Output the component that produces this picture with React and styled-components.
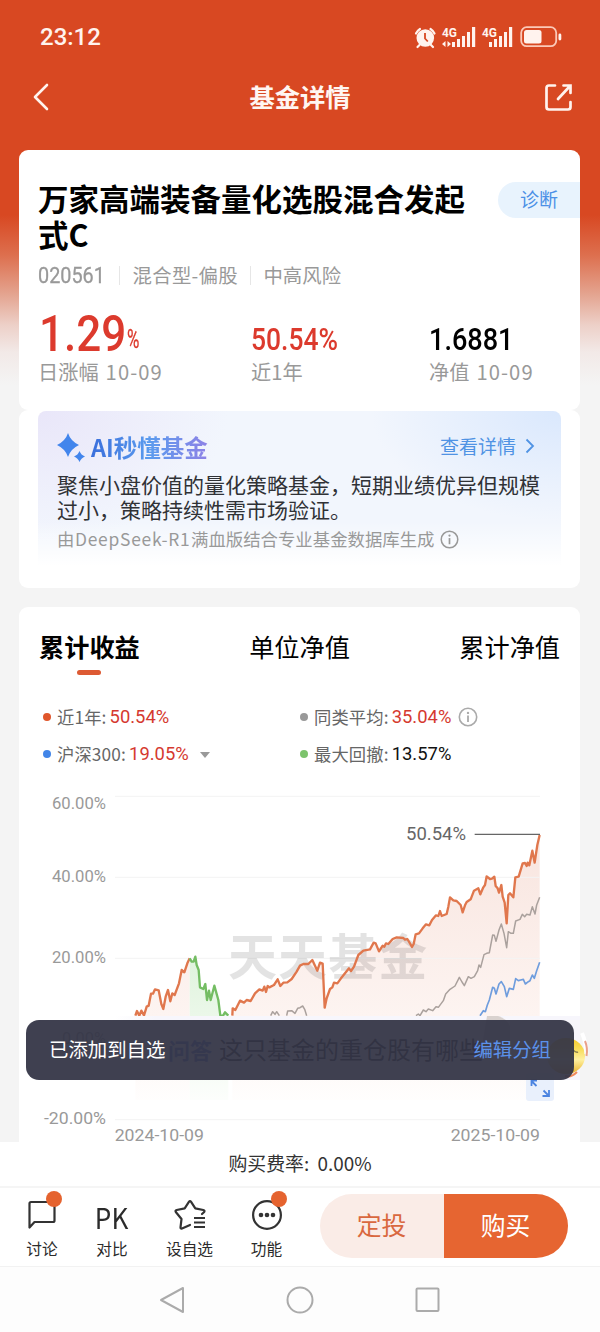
import React from "react";
import styled, { createGlobalStyle, css } from "styled-components";

const GlobalStyle = createGlobalStyle`
  * {
    box-sizing: border-box;
  }
  body {
    margin: 0;
    background: #f4f4f4;
    font-family: "Noto Sans CJK SC", sans-serif;
  }
`;

const Screen = styled.div`
  position: relative;
  display: flex;
  flex-direction: column;
  width: 600px;
  height: 1332px;
  overflow: hidden;
  background: linear-gradient(
    #d84822 0,
    #d84822 215px,
    #dd6f4e 255px,
    #e4a591 295px,
    #edd0c8 325px,
    #f2e9e7 352px,
    #f4f4f4 385px
  );
`;

const Digits = styled.span`
  display: inline-block;
  font-family: Roboto, sans-serif;
  transform: scaleX(${(p) => p.$narrow || 1});
  transform-origin: left center;
`;

const StatusBar = styled.div`
  display: flex;
  justify-content: space-between;
  height: 74px;
  padding: 22px 38px 0 40px;
  color: #fff3ee;
  font-family: Roboto, sans-serif;
  font-size: 24px;
  font-weight: 500;
  line-height: 30px;
`;

const NavBar = styled.div`
  display: flex;
  align-items: center;
  justify-content: space-between;
  height: 46px;
  margin-bottom: 30px;
  padding: 0 27px 0 32px;
`;

const NavTitle = styled.h1`
  margin: -2px 0 0 6px;
  color: #fff6f2;
  font-size: 25.3px;
  font-weight: 700;
  line-height: 44px;
`;

const Content = styled.div`
  flex: none;
  height: 992px;
  padding: 0 20px 0 19px;
`;

const Card = styled.section`
  background: #fff;
  border-radius: 9px;
`;

const SummaryCard = styled(Card)`
  height: 260px;
  padding: 30px 0 0 19px;
`;

const TitleRow = styled.div`
  display: flex;
  justify-content: space-between;
  align-items: flex-start;
`;

const FundName = styled.h2`
  width: 430px;
  margin: 0;
  color: #000;
  font-size: 30.5px;
  font-weight: 700;
  line-height: 36px;
`;

const DiagnoseTag = styled.span`
  width: 82px;
  height: 36px;
  margin-top: 2px;
  padding-left: 22px;
  border-radius: 18px 0 0 18px;
  background: #e8f3fd;
  color: #4c90e6;
  font-size: 19px;
  line-height: 34px;
`;

const Meta = styled.div`
  display: flex;
  align-items: center;
  height: 24px;
  margin-top: 11px;
  color: #999;
  font-size: 19.4px;
  line-height: 24px;
`;

const FundCode = styled(Digits)`
  width: 67px;
  padding-top: 1px;
  font-size: 22px;
  -webkit-text-stroke: 0.3px #999;
`;

const FundType = styled.span`
  letter-spacing: ${(p) => p.$space || 0}px;
`;

const Divider = styled.i`
  width: 1px;
  height: 19px;
  margin: 0 12.5px 0 ${(p) => p.$left || 12}px;
  background: #e6e6e6;
`;

const Stats = styled.div`
  display: grid;
  grid-template-columns: 213px 178px auto;
  align-items: end;
  margin-top: 25px;
`;

const StatValue = styled.div`
  display: flex;
  height: ${(p) => (p.$big ? 44 : 32)}px;
  padding-left: ${(p) => (p.$big ? 1 : 0)}px;
  color: ${(p) => (p.$up ? "#dc3a2d" : "#000")};
  font-size: ${(p) => (p.$big ? 50 : 31.5)}px;
  font-weight: 500;
  line-height: ${(p) => (p.$big ? 44 : 32)}px;
`;

const SmallPercent = styled(Digits)`
  width: 14px;
  margin-left: -11px;
  padding-top: 10px;
  font-size: 26px;
  font-weight: 400;
  line-height: 34px;
  -webkit-text-stroke: 0.3px #dc3a2d;
`;

const StatLabel = styled.div`
  margin-top: 3px;
  color: #999;
  font-size: 20.2px;
  line-height: 26px;
`;

const StatDate = styled.span`
  margin-left: 7px;
  letter-spacing: 1.1px;
`;

const AiCard = styled(Card)`
  height: 178px;
  padding: 1px 19px 0;
`;

const AiPanel = styled.div`
  height: 158px;
  padding: 22px 19px 0;
  border-radius: 8px 8px 0 0;
  background: linear-gradient(rgba(255, 255, 255, 0) 70%, #fff 98%),
    radial-gradient(ellipse 190px 130px at 0 0, #e9e6f9, rgba(233, 230, 249, 0)),
    radial-gradient(ellipse 190px 110px at 100% 0, #dae8fd, rgba(218, 232, 253, 0)),
    #f2f6fd;
`;

const AiHead = styled.div`
  display: flex;
  align-items: center;
  height: 28px;
`;

const AiTitle = styled.b`
  margin-left: 5px;
  background: linear-gradient(90deg, #3a6fdc, #5b9bee 50%, #8e82e6);
  background-clip: text;
  color: transparent;
  font-size: 23.5px;
  line-height: 28px;
`;

const AiMore = styled.span`
  display: flex;
  align-items: center;
  gap: 9px;
  margin: -2px 7px 0 auto;
  color: #5093e4;
  font-size: 19px;
  line-height: 28px;
`;

const AiText = styled.p`
  width: 492px;
  margin: 11px 0 0;
  color: #303236;
  font-size: 21px;
  line-height: 25px;
`;

const AiSource = styled.div`
  display: flex;
  align-items: center;
  gap: 5px;
  margin-top: 5px;
  color: #999;
  font-size: 17.4px;
  line-height: 24px;
`;

const ModelName = styled.span`
  margin: 0 -4.4px;
  letter-spacing: 0.75px;
`;

const ChartCard = styled(Card)`
  height: 535px;
  margin-top: 19px;
  padding-top: 21px;
  border-radius: 9px 9px 0 0;
`;

const Tabs = styled.div`
  display: flex;
  justify-content: space-between;
  padding: 0 20px;
`;

const Tab = styled.div`
  display: flex;
  flex-direction: column;
  align-items: center;
  color: #000;
  font-size: 25.2px;
  font-weight: ${(p) => (p.$active ? 700 : 400)};
  line-height: 36px;
  ${(p) =>
    p.$active &&
    css`
      &::after {
        content: "";
        width: 24px;
        height: 5px;
        margin-top: 6px;
        border-radius: 3px;
        background: #dd5a33;
      }
    `}
`;

const Legend = styled.div`
  display: grid;
  grid-template-columns: 257px auto;
  grid-auto-rows: 37px;
  align-items: center;
  margin-top: 23px;
  padding-left: 24px;
`;

const LegendItem = styled.div`
  display: flex;
  align-items: center;
  color: #666;
  font-size: 17.3px;
  letter-spacing: 0.15px;
  line-height: 24px;
`;

const Dot = styled.i`
  width: 8px;
  height: 8px;
  margin-right: 6px;
  border-radius: 50%;
  background: ${(p) => p.$color};
`;

const LegendValue = styled(Digits)`
  margin: 0 7px 0 3px;
  color: ${(p) => (p.$up ? "#d5392f" : "#111")};
  font-size: 18.4px;
  letter-spacing: 0;
`;

const Caret = styled.i`
  margin: 2px 0 0 4px;
  border: 5px solid transparent;
  border-top: 6px solid #999;
  border-bottom: 0;
`;

const ChartSvg = styled.svg`
  display: block;
  margin: 14px 0 0 19px;
  overflow: visible;
  font-family: Roboto, sans-serif;
`;

const FeeBar = styled.div`
  height: 46px;
  flex: none;
  border-bottom: 2px solid #f5f5f5;
  background: #fff;
  color: #333;
  font-size: 18.9px;
  line-height: 41px;
  text-align: center;
  word-spacing: 4px;
`;

const ActionBar = styled.div`
  display: grid;
  grid-template-columns: 84px 56px 99px 55px auto;
  flex: none;
  height: 79px;
  border-bottom: 1px solid #f2f2f2;
  background: #fff;
`;

const Action = styled.div`
  display: flex;
  flex-direction: column;
  align-items: center;
  padding-top: 12px;
  color: #2b2b2b;
  font-size: 15.7px;
  line-height: 22px;
`;

const ActionIcon = styled.div`
  position: relative;
  height: 36px;
  margin-bottom: 2px;
`;

const Badge = styled.i`
  position: absolute;
  top: -9px;
  right: ${(p) => p.$right}px;
  width: 16px;
  height: 16px;
  border-radius: 50%;
  background: #e5632f;
`;

const BuyButtons = styled.div`
  display: grid;
  grid-template-columns: 1fr 1fr;
  width: 248px;
  height: 64px;
  margin: 6px 0 0 26px;
  border-radius: 32px;
  overflow: hidden;
`;

const BuyButton = styled.button`
  padding: 0 1px 4px 0;
  border: 0;
  background: ${(p) => (p.$primary ? "#e66531" : "#faece7")};
  color: ${(p) => (p.$primary ? "#fff" : "#d9683f")};
  font-family: inherit;
  font-size: 24.8px;
`;

const SystemNav = styled.div`
  display: flex;
  justify-content: center;
  align-items: center;
  gap: 100px;
  flex: 1;
  background: #fdfdfd;
`;

const AskBar = styled.div`
  position: absolute;
  top: 1016px;
  left: 115px;
  width: 465px;
  height: 64px;
  padding-left: 53px;
  background: linear-gradient(90deg, #fff, #f7f6fc 40px);
  color: #000;
  font-size: 24px;
  line-height: 66px;
  white-space: nowrap;
  overflow: hidden;

  b {
    margin-right: 7px;
    color: #3a5cd8;
    font-size: 22px;
  }
`;

const Mascot = styled.svg`
  position: absolute;
  left: ${(p) => p.$left}px;
  top: ${(p) => p.$top}px;
`;

const ExpandButton = styled.div`
  position: absolute;
  left: 526px;
  top: 1073px;
  width: 28px;
  height: 28px;
  border-radius: 3px;
  background: #e9f0fc;
`;

const Toast = styled.div`
  position: absolute;
  top: 1020px;
  left: 26px;
  display: flex;
  justify-content: space-between;
  width: 548px;
  height: 60px;
  padding: 0 23px;
  border-radius: 13px;
  background: rgba(53, 54, 71, 0.95);
  color: #fff;
  font-size: 19.4px;
  line-height: 57px;
`;

const ToastLink = styled.span`
  color: #5b91ea;
`;

const tabs = ["累计收益", "单位净值", "累计净值"];

const legend = [
  { color: "#e0562b", label: "近1年:", value: "50.54%", up: true },
  { color: "#999", label: "同类平均:", value: "35.04%", up: true, info: true },
  { color: "#4285e8", label: "沪深300:", value: "19.05%", up: true, menu: true },
  { color: "#7cc36c", label: "最大回撤:", value: "13.57%" },
];

// chart points use three units per pixel
const fundStart =
  "406,707 411,693 418,707 424,692 432,706 440,680 446,677 453,641 459,641 465,628 476,631 484,672 490,687 497,650 504,630 511,664 517,640 524,645 537,610 545,570 553,577 562,550 569,535";
const fundDrop =
  "569,535 575,545 581,545 586,530 590,555 596,570 600,622 610,627 616,612 621,660 627,632 632,660 643,617 655,660 661,707 669,707 675,697 685,707";
const fundEnd =
  "697,707 698,685 706,690 720,662 732,668 740,660 752,663 765,640 778,628 788,632 793,620 798,636 803,618 808,622 822,615 833,598 841,618 850,608 862,607 875,597 890,575 900,557 910,552 925,552 937,540 952,572 960,548 968,551 974,683 980,655 990,627 997,622 1002,608 1012,610 1023,595 1035,580 1047,565 1053,573 1062,560 1075,525 1090,512 1110,508 1121,488 1127,490 1137,514 1148,497 1153,500 1158,490 1165,492 1178,477 1190,472 1210,474 1215,479 1222,477 1230,490 1236,501 1241,492 1247,463 1257,460 1268,445 1278,433 1288,436 1296,420 1308,406 1315,408 1320,393 1325,408 1340,402 1345,380 1350,352 1360,361 1370,363 1382,375 1388,397 1395,376 1400,366 1412,358 1422,332 1435,325 1441,343 1450,322 1455,315 1460,289 1470,297 1476,296 1483,290 1487,318 1493,325 1497,338 1504,315 1508,350 1514,368 1520,430 1525,345 1530,340 1540,352 1546,292 1556,290 1568,250 1575,249 1580,258 1583,248 1588,256 1597,212 1604,248 1612,195 1619,165";
const averageStart =
  "812,707 818,695 825,703 830,695 838,707";
const averageMiddle =
  "860,707 863,693 875,692 885,700 893,685 900,683 908,678 914,688 920,707";
const averageEnd =
  "1248,707 1255,702 1260,707 1270,690 1278,695 1285,687 1298,692 1308,680 1315,682 1330,662 1337,642 1350,628 1365,618 1378,592 1386,606 1393,617 1405,590 1413,595 1423,590 1433,572 1437,555 1442,562 1452,524 1460,520 1468,518 1478,465 1483,466 1488,484 1497,450 1504,432 1512,460 1520,503 1525,455 1533,460 1540,460 1547,423 1560,418 1567,403 1574,410 1580,403 1590,405 1597,380 1605,402 1610,375 1619,352";
const index300 =
  "1440,707 1450,692 1456,695 1462,675 1468,660 1478,622 1483,625 1488,642 1497,612 1504,605 1513,620 1520,650 1528,625 1540,628 1547,596 1555,602 1562,600 1570,598 1576,612 1585,605 1590,602 1597,585 1603,595 1610,572 1619,547";

const InfoIcon = ({ size, color }) => (
  <svg width={size} height={size} viewBox="0 0 20 20" fill="none" stroke={color}>
    <circle cx="10" cy="10" r="8.7" strokeWidth="1.6" />
    <path d="M10 8.500v6.500" strokeWidth="1.800" />
    <circle cx="10" cy="5.900" r="1.200" fill={color} stroke="none" />
  </svg>
);

const StatusIcons = () => (
  <svg width="148" height="30" viewBox="414 22 148 30" fill="#fff3ee">
    <circle cx="425.300" cy="38" r="8.800" />
    <path
      d="M416 33.500a11 11 0 0 1 4-4.500M434.500 33.500a11 11 0 0 0-4-4.500M419.500 45l-2 2M431 45l2 2"
      fill="none"
      stroke="#fff3ee"
      strokeWidth="2.200"
      strokeLinecap="round"
    />
    <path d="M425 33v5.500l2.800 3" fill="none" stroke="#d84822" strokeWidth="1.800" />
    <text x="442" y="37" fontSize="12.500" fontWeight="700" textLength="15" lengthAdjust="spacingAndGlyphs">
      4G
    </text>
    <path d="M442 44l3.500-3v6zM451 44l-3.500-3v6z" />
    <path d="M452 42h3v5h-3zM457 39h3v8h-3zM462 36h3v11h-3zM467 32h3v15h-3zM472 27h3.200v20H472z" />
    <text x="482" y="37" fontSize="12.500" fontWeight="700" textLength="15" lengthAdjust="spacingAndGlyphs">
      4G
    </text>
    <path d="M489 42h3v5h-3zM494 39h3v8h-3zM499 36h3v11h-3zM504 32h3v15h-3zM509 27h3.200v20H509z" />
    <rect
      x="521.200"
      y="27.200"
      width="35"
      height="19"
      rx="5.500"
      fill="none"
      stroke="#fbc9b8"
      strokeWidth="1.800"
    />
    <rect x="524" y="30" width="17.500" height="13.500" rx="2.500" />
    <rect x="558.500" y="33.500" width="2.800" height="7" rx="1.400" />
  </svg>
);

const Chart = () => (
  <ChartSvg width="524" height="346" viewBox="114 18 1572 1038">
    <defs>
      <linearGradient id="rise" x1="0" y1="165" x2="0" y2="1000" gradientUnits="userSpaceOnUse">
        <stop offset="0" stopColor="#f8e5df" />
        <stop offset="0.65" stopColor="#fdf4f1" />
        <stop offset="1" stopColor="#fff" />
      </linearGradient>
      <linearGradient id="drop" x1="0" y1="530" x2="0" y2="1000" gradientUnits="userSpaceOnUse">
        <stop offset="0" stopColor="#dff3dc" />
        <stop offset="1" stopColor="#fff" />
      </linearGradient>
    </defs>
    <polygon fill="url(#rise)" points={`${fundStart} 569,960 406,960`} />
    <polygon fill="url(#rise)" points={`${fundEnd} 1619,960 697,960`} />
    <polygon fill="url(#drop)" points={`${fundDrop} 685,960 569,960`} />
    <path d="M345 49h1275M345 292h1275M345 535h1275M345 1019h1275" stroke="#f3f3f3" strokeWidth="3" />
    <text
      x="684"
      y="586"
      fill="#000"
      fillOpacity="0.11"
      fontFamily="Noto Sans CJK SC"
      fontSize="147"
      fontWeight="700"
      textLength="598"
    >
      天天基金
    </text>
    <g fill="none" strokeLinejoin="round">
      <g stroke="#aaa19d" strokeWidth="4.500">
        <polyline points={averageStart} />
        <polyline points={averageMiddle} />
        <polyline points={averageEnd} />
      </g>
      <polyline points={index300} stroke="#6f9ddd" strokeWidth="5" />
      <polyline points={fundStart} stroke="#e0774d" strokeWidth="7" />
      <polyline points={fundEnd} stroke="#e0774d" strokeWidth="7" />
      <polyline points={fundDrop} stroke="#74bd63" strokeWidth="7" />
      <path d="M1424 163h196" stroke="#666" strokeWidth="4" />
    </g>
    <g fill="#999" fontSize="52">
      <text x="156" y="86" textLength="162" lengthAdjust="spacingAndGlyphs">60.00%</text>
      <text x="156" y="306" textLength="162" lengthAdjust="spacingAndGlyphs">40.00%</text>
      <text x="156" y="549" textLength="162" lengthAdjust="spacingAndGlyphs">20.00%</text>
      <text x="186" y="792" textLength="132" lengthAdjust="spacingAndGlyphs">0.00%</text>
      <text x="132" y="1033" textLength="186" lengthAdjust="spacingAndGlyphs">-20.00%</text>
      <text x="344" y="1084" textLength="268" lengthAdjust="spacingAndGlyphs">2024-10-09</text>
      <text x="1352" y="1084" textLength="268" lengthAdjust="spacingAndGlyphs">2025-10-09</text>
    </g>
    <text x="1218" y="180" fill="#666" fontSize="54" textLength="180" lengthAdjust="spacingAndGlyphs">
      50.54%
    </text>
  </ChartSvg>
);

const ChatIcon = () => (
  <svg width="28" height="30" viewBox="0 0 28 30" fill="none" stroke="#333" strokeWidth="2.200">
    <path d="M1.500 27.500V3.500q0-1.500 1.500-1.500h22q1.500 0 1.500 1.500v17q0 1.500-1.500 1.500H6.500z" strokeLinejoin="round" />
  </svg>
);

const PkIcon = styled.div`
  font-family: "Noto Sans CJK SC", sans-serif;
  font-size: 29px;
  line-height: 32px;
  transform: scaleX(0.9);
`;

const StarListIcon = () => (
  <svg width="32" height="32" viewBox="0 0 32 32" fill="none" stroke="#333" strokeWidth="2.200">
    <path
      d="M16 25l-8 3.500q-1.600.500-1.500-1.200L7.500 19l-5.700-7q-.900-1.600.900-2l8-1.600 4.200-6.500q1.100-1.500 2.200 0l4.200 6.500 8 1.600q1.800.400.900 2L28 14"
      strokeLinejoin="round"
      strokeLinecap="round"
    />
    <path d="M20 18h11M20 22.500h11M20 27h11" />
  </svg>
);

const MoreIcon = () => (
  <svg width="30" height="30" viewBox="0 0 30 30" fill="#333">
    <circle cx="15" cy="15" r="13.900" fill="none" stroke="#333" strokeWidth="2.200" />
    <circle cx="9" cy="15" r="2.300" />
    <circle cx="15" cy="15" r="2.300" />
    <circle cx="21" cy="15" r="2.300" />
  </svg>
);

const Header = () => (
  <>
    <StatusBar>
      <span>23:12</span>
      <StatusIcons />
    </StatusBar>
    <NavBar>
      <svg width="18" height="28" viewBox="0 0 18 28" fill="none" stroke="#fff3ee" strokeWidth="2.600">
        <path d="M15 2L3 14l12 12" strokeLinecap="round" strokeLinejoin="round" />
      </svg>
      <NavTitle>基金详情</NavTitle>
      <svg width="29" height="29" viewBox="0 0 29 29" fill="none" stroke="#fff3ee" strokeWidth="2.700">
        <path d="M11 2.500H5Q2.500 2.500 2.500 5v19Q2.500 26.500 5 26.500h19q2.500 0 2.500-2.500v-5" strokeLinecap="round" />
        <path d="M14 16L26 3M19.500 2.500h7V10" strokeLinecap="round" />
      </svg>
    </NavBar>
  </>
);

const Summary = () => (
  <SummaryCard>
    <TitleRow>
      <FundName>万家高端装备量化选股混合发起式C</FundName>
      <DiagnoseTag>诊断</DiagnoseTag>
    </TitleRow>
    <Meta>
      <FundCode $narrow={0.9}>020561</FundCode>
      <Divider $left={14} />
      <FundType $space={0.3}>混合型-偏股</FundType>
      <Divider />
      <FundType>中高风险</FundType>
    </Meta>
    <Stats>
      <div>
        <StatValue $up $big>
          <Digits $narrow={0.88}>1.29</Digits>
          <SmallPercent $narrow={0.65}>%</SmallPercent>
        </StatValue>
        <StatLabel>
          日涨幅<StatDate>10-09</StatDate>
        </StatLabel>
      </div>
      <div>
        <StatValue $up>
          <Digits $narrow={0.84}>50.54%</Digits>
        </StatValue>
        <StatLabel>近1年</StatLabel>
      </div>
      <div>
        <StatValue>
          <Digits $narrow={0.86}>1.6881</Digits>
        </StatValue>
        <StatLabel>
          净值<StatDate>10-09</StatDate>
        </StatLabel>
      </div>
    </Stats>
  </SummaryCard>
);

const AiSummary = () => (
  <AiCard>
    <AiPanel>
      <AiHead>
        <svg width="29" height="30" viewBox="0 0 29 30" fill="#4285ec">
          <path d="M11 1q2.500 8 11 12-8.500 4-11 12Q8.500 17 0 13 8.500 9 11 1z" />
          <path d="M22.500 19q1.500 4 5.500 5.500-4 1.500-5.500 5.500-1.500-4-5.500-5.500 4-1.500 5.500-5.500z" />
        </svg>
        <AiTitle>AI秒懂基金</AiTitle>
        <AiMore>
          查看详情
          <svg width="10" height="16" viewBox="0 0 10 16" fill="none" stroke="#5093e4" strokeWidth="1.800">
            <path d="M1.500 1.500L8 8l-6.500 6.500" />
          </svg>
        </AiMore>
      </AiHead>
      <AiText>聚焦小盘价值的量化策略基金，短期业绩优异但规模过小，策略持续性需市场验证。</AiText>
      <AiSource>
        <span>由</span>
        <ModelName>DeepSeek-R1</ModelName>
        <span>满血版结合专业基金数据库生成</span>
        <InfoIcon size={19} color="#999" />
      </AiSource>
    </AiPanel>
  </AiCard>
);

const Performance = () => (
  <ChartCard>
    <Tabs>
      {tabs.map((tab, i) => (
        <Tab key={tab} $active={i === 0}>
          {tab}
        </Tab>
      ))}
    </Tabs>
    <Legend>
      {legend.map((item) => (
        <LegendItem key={item.label}>
          <Dot $color={item.color} />
          {item.label}
          <LegendValue $up={item.up}>{item.value}</LegendValue>
          {item.info && <InfoIcon size={20} color="#aaa" />}
          {item.menu && <Caret />}
        </LegendItem>
      ))}
    </Legend>
    <Chart />
  </ChartCard>
);

const Footer = () => (
  <>
    <FeeBar>购买费率: 0.00%</FeeBar>
    <ActionBar>
      <Action>
        <ActionIcon>
          <ChatIcon />
          <Badge $right={-6} />
        </ActionIcon>
        讨论
      </Action>
      <Action>
        <ActionIcon>
          <PkIcon>PK</PkIcon>
        </ActionIcon>
        对比
      </Action>
      <Action>
        <ActionIcon>
          <StarListIcon />
        </ActionIcon>
        设自选
      </Action>
      <Action>
        <ActionIcon>
          <MoreIcon />
          <Badge $right={-5} />
        </ActionIcon>
        功能
      </Action>
      <BuyButtons>
        <BuyButton>定投</BuyButton>
        <BuyButton $primary>购买</BuyButton>
      </BuyButtons>
    </ActionBar>
    <SystemNav>
      <svg width="28" height="28" viewBox="0 0 28 28" fill="none" stroke="#ababab" strokeWidth="2">
        <path d="M25 2v24L3 14z" strokeLinejoin="round" />
      </svg>
      <svg width="28" height="28" viewBox="0 0 28 28" fill="none" stroke="#ababab" strokeWidth="2">
        <circle cx="14" cy="14" r="12.500" />
      </svg>
      <svg width="28" height="28" viewBox="0 0 28 28" fill="none" stroke="#ababab" strokeWidth="2">
        <rect x="2.500" y="2.500" width="22" height="22.500" rx="1" />
      </svg>
    </SystemNav>
  </>
);

const App = () => (
  <Screen>
    <GlobalStyle />
    <Header />
    <Content>
      <Summary />
      <AiSummary />
      <Performance />
    </Content>
    <Footer />
    <AskBar>
      <b>问答</b>这只基金的重仓股有哪些
    </AskBar>
    <ExpandButton>
      <svg width="28" height="28" viewBox="0 0 28 28" fill="none" stroke="#4c84e0" strokeWidth="1.800">
        <path d="M10.500 13L5.500 8M5.500 13V7.500H11M17.500 17.500l5 5M23 17v6h-6.500" />
      </svg>
    </ExpandButton>
    <Mascot $left={476} $top={1016} width="40" height="40" viewBox="0 0 40 40">
      <path d="M11 0h11q8 2 12 10v20H6z" fill="#d9d2cf" />
    </Mascot>
    <Mascot $left={545} $top={1030} width="48" height="50" viewBox="0 0 48 50">
      <defs>
        <linearGradient id="coin" x1="0" y1="0" x2="0" y2="1">
          <stop offset="0" stopColor="#f6c92c" />
          <stop offset="0.3" stopColor="#f7dc58" />
          <stop offset="0.6" stopColor="#fff0a0" />
          <stop offset="1" stopColor="#e9b32a" />
        </linearGradient>
      </defs>
      <ellipse cx="21" cy="26" rx="19" ry="18" fill="url(#coin)" />
      <path d="M28 20q3 3 5 2" fill="none" stroke="#8d8250" strokeWidth="1.500" />
      <path d="M37 3q4 9 4.500 21" fill="none" stroke="#fff" strokeWidth="4" />
      <path d="M40 11q3 7 1.500 15" fill="none" stroke="#e9a08a" strokeWidth="2" />
      <path d="M20 46q6 2 12-4" fill="none" stroke="#f08a5c" strokeWidth="2" />
    </Mascot>
    <Toast>
      <span>已添加到自选</span>
      <ToastLink>编辑分组</ToastLink>
    </Toast>
  </Screen>
);

export default App;
